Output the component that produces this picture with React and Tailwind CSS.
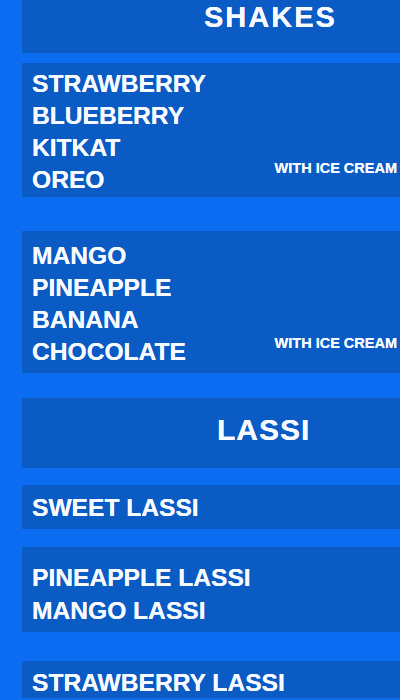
export default function App() {
  const font = { fontFamily: '"Liberation Sans", Arial, Helvetica, sans-serif' };
  const panel = "bg-[#0a5bc4] text-[#f7faff] font-bold [text-shadow:0_0_0.5px_#ffffff]";
  const item = "text-[24.6px] leading-[32px]";
  return (
    <div className="w-[400px] h-[700px] overflow-hidden bg-[#0c6df3] pl-[22px]" style={font}>
      {/* SHAKES header */}
      <div className={`${panel} h-[53px] pt-[3px] pl-[182px] text-[29px] leading-[29px] tracking-[2px]`}>
        SHAKES
      </div>

      {/* Group 1 */}
      <div className={`${panel} mt-[10px] h-[134px] pt-[5px] pl-[10px] flex justify-between items-end`}>
        <div className={`${item} self-start`}>
          <div>STRAWBERRY</div>
          <div>BLUEBERRY</div>
          <div>KITKAT</div>
          <div>OREO</div>
        </div>
        <div className="text-[14.5px] leading-[15px] mb-[21px] pr-[3px] whitespace-nowrap">WITH ICE CREAM</div>
      </div>

      {/* Group 2 */}
      <div className={`${panel} mt-[34px] h-[142px] pt-[9px] pl-[10px] flex justify-between items-end`}>
        <div className={`${item} self-start`}>
          <div>MANGO</div>
          <div>PINEAPPLE</div>
          <div>BANANA</div>
          <div>CHOCOLATE</div>
        </div>
        <div className="text-[14.5px] leading-[15px] mb-[22px] pr-[3px] whitespace-nowrap">WITH ICE CREAM</div>
      </div>

      {/* LASSI header */}
      <div className={`${panel} mt-[25px] h-[70px] pt-[17px] pl-[195px] text-[30px] leading-[30px] tracking-[1px]`}>
        LASSI
      </div>

      <div className={`${panel} mt-[17px] h-[44px] pt-[7px] pl-[10px] ${item}`}>
        SWEET LASSI
      </div>

      <div className={`${panel} mt-[18px] h-[85px] pt-[14px] pl-[10px] text-[24.6px] leading-[33px]`}>
        <div>PINEAPPLE LASSI</div>
        <div>MANGO LASSI</div>
      </div>

      <div className={`${panel} mt-[29px] h-[37px] pt-[7px] pl-[10px] text-[24.6px] leading-[30px]`}>
        STRAWBERRY LASSI
      </div>
    </div>
  );
}
